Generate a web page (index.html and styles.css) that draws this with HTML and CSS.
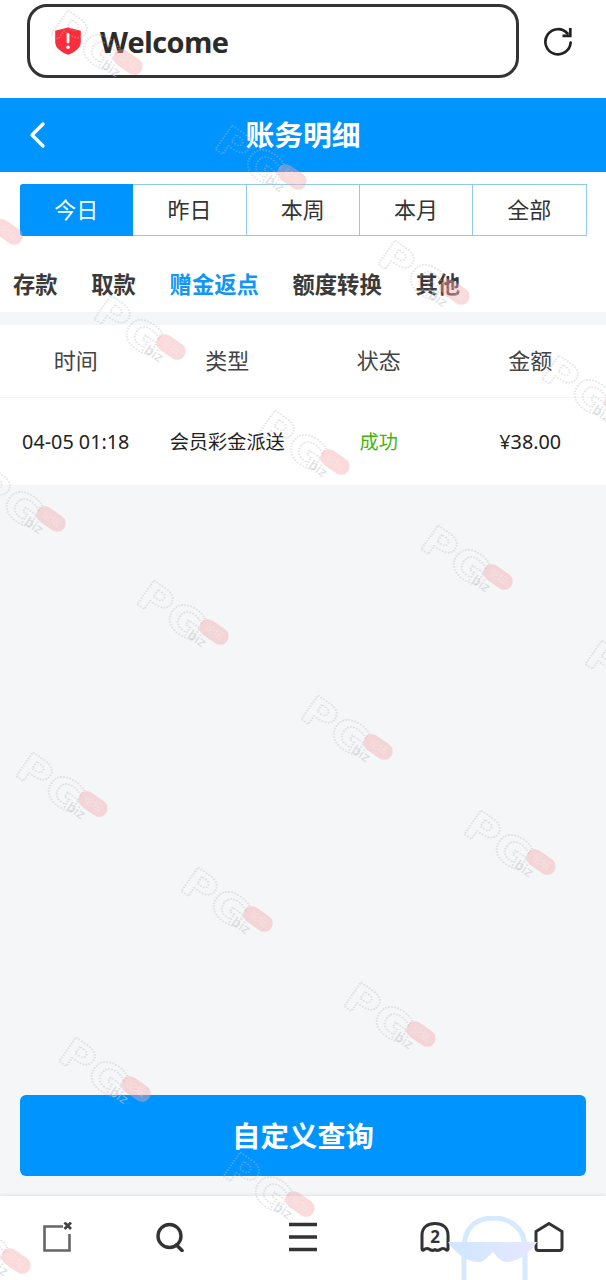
FILE: index.html
```html
<!DOCTYPE html>
<html lang="zh-CN">
<head>
<meta charset="utf-8">
<title>账务明细</title>
<link rel="stylesheet" href="styles.css">
</head>
<body>
<div class="page">
  <div class="topbar">
    <div class="address">
      <svg class="shield" viewBox="0 0 26 28"><path d="M13 0.5 L25 3.5 Q25.8 3.7 25.8 4.6 V15 C25.8 21 20 25 13 27.8 C6 25 0.2 21 0.2 15 V4.6 Q0.2 3.7 1 3.5 Z" fill="#fa2d3c"/><rect x="11.600" y="6" width="2.800" height="10.500" rx="1.400" fill="#fff"/><circle cx="13" cy="20.300" r="1.800" fill="#fff"/></svg>
      <span class="welcome">Welcome</span>
    </div>
    <svg class="reload" viewBox="0 0 30 30"><path d="M24.500 7.500 A12.600 12.600 0 1 0 27.600 16.500" fill="none" stroke="#222" stroke-width="2.700" stroke-linecap="round"/><path d="M27.300 2 V9.800 H19.500" fill="none" stroke="#222" stroke-width="2.700"/></svg>
  </div>
  <header class="header">
    <svg class="back" viewBox="0 0 18 28"><path d="M15 3 L4 14 L15 25" fill="none" stroke="#fff" stroke-width="3.400" stroke-linecap="round" stroke-linejoin="round"/></svg>
    <h1 class="title">账务明细</h1>
  </header>
  <div class="tabs">
    <div class="tab tab-on">今日</div>
    <div class="tab">昨日</div>
    <div class="tab">本周</div>
    <div class="tab">本月</div>
    <div class="tab">全部</div>
  </div>
  <nav class="subnav">
    <span>存款</span>
    <span>取款</span>
    <span class="sub-on">赠金返点</span>
    <span>额度转换</span>
    <span>其他</span>
  </nav>
  <main class="content">
    <section class="table">
      <div class="row row-head">
        <div>时间</div><div>类型</div><div>状态</div><div>金额</div>
      </div>
      <div class="row row-data">
        <div class="num">04-05 01:18</div><div>会员彩金派送</div><div class="ok">成功</div><div class="num">¥38.00</div>
      </div>
    </section>
    <button class="query">自定义查询</button>
  </main>
  <footer class="footer">
    <div class="group group-left">
      <svg class="ico" viewBox="0 0 30 30"><path d="M21 4.500 H2.500 V28.500 H27.500 V12" fill="none" stroke="#666" stroke-width="2.600"/><path d="M22.500 0.500 L29 7 M29 0.500 L22.500 7" stroke="#444" stroke-width="2.800"/></svg>
      <svg class="ico" viewBox="0 0 30 30"><circle cx="14.500" cy="14" r="11.500" fill="none" stroke="#333" stroke-width="3.400"/><path d="M21.500 23 L27 28.500" stroke="#333" stroke-width="3.600" stroke-linecap="round"/></svg>
    </div>
    <svg class="ico" viewBox="0 0 30 30"><path d="M1 2.500 H29 M1 15 H29 M1 27.500 H29" stroke="#333" stroke-width="3.600"/></svg>
    <div class="group group-right">
      <svg class="ico" viewBox="0 0 30 30"><path d="M2 27 V13 C2 5.500 7.500 1.500 15 1.500 C22.500 1.500 28 5.500 28 13 V27 Q28 28.500 26.500 28 Q23.500 25.500 21 27 Q18 29.500 15 27.500 Q12 29.500 9 27 Q6.500 25.500 3.500 28 Q2 28.500 2 27 Z" fill="none" stroke="#333" stroke-width="3" stroke-linejoin="round"/><text class="ghost-num" x="15" y="20.500" text-anchor="middle">2</text></svg>
      <svg class="ico" viewBox="0 0 30 30"><path d="M15 1.500 L28 9.500 V26 Q28 28.500 25.500 28.500 H4.500 Q2 28.500 2 26 V9.500 Z" fill="none" stroke="#333" stroke-width="3" stroke-linejoin="round"/></svg>
    </div>
    <svg class="mascot" viewBox="0 0 90 64">
      <defs><linearGradient id="mg" x1="0" x2="1" y1="0" y2="0"><stop offset="0" stop-color="#cfe6ff"/><stop offset="1" stop-color="#e6e8ff"/></linearGradient></defs>
      <path d="M16 64 V32 C16 12 28 2 45 2 C62 2 77 12 77 32 V64" fill="none" stroke="#d6e9ff" stroke-width="5"/>
      <path d="M0 26 H89 C84 34 72 46 58 46 C52 46 47 38 45 36 C42 38 37 46 31 46 C17 46 5 34 0 26 Z" fill="url(#mg)"/>
    </svg>
  </footer>

  <svg class="watermarks" viewBox="0 0 606 1280">
    <defs>
      <g id="wm">
        <g transform="translate(8,9) rotate(35) scale(1.15,1)"><text class="wm-pg" x="0" y="18">PG</text></g>
        <text class="wm-biz" transform="translate(52,50) rotate(35)" x="0" y="8">.biz</text>
        <g transform="rotate(35 78 54)">
          <rect class="wm-pill" x="62" y="45.500" width="32" height="17" rx="8.500"/>
          <text class="wm-tag" x="78" y="57.200" text-anchor="middle">论坛</text>
        </g>
      </g>
    </defs>
    <use href="#wm" x="50" y="8"/><use href="#wm" x="214" y="123"/><use href="#wm" x="377" y="238"/><use href="#wm" x="541" y="353"/>
    <use href="#wm" x="-70" y="178"/>
    <use href="#wm" x="93" y="293"/><use href="#wm" x="257" y="408"/><use href="#wm" x="420" y="523"/><use href="#wm" x="584" y="638"/>
    <use href="#wm" x="-27" y="465"/><use href="#wm" x="136" y="578"/><use href="#wm" x="300" y="693"/><use href="#wm" x="463" y="808"/>
    <use href="#wm" x="15" y="750"/><use href="#wm" x="180" y="865"/><use href="#wm" x="343" y="980"/>
    <use href="#wm" x="58" y="1035"/><use href="#wm" x="222" y="1150"/>
    <use href="#wm" x="-62" y="1207"/>
  </svg>
</div>
</body>
</html>
```
FILE: styles.css
```css
* { box-sizing: border-box; }
html, body { margin: 0; padding: 0; }
body {
  font-family: "Noto Sans", "Noto Sans CJK SC", sans-serif;
  color: #333;
  background: #fff;
  line-height: 1;
}
.page {
  position: relative;
  width: 606px;
  height: 1280px;
  display: flex;
  flex-direction: column;
  overflow: hidden;
  background: #f5f6f8;
}
.topbar {
  height: 98px;
  flex: none;
  background: #fff;
  display: flex;
  align-items: flex-start;
  padding: 4px 0 0 27px;
}
.address {
  width: 492px;
  height: 74px;
  border: 3px solid #333;
  border-radius: 20px;
  display: flex;
  align-items: center;
  padding-left: 25px;
  gap: 19px;
}
.shield { width: 26px; height: 28px; flex: none; }
.welcome {
  font-family: "Open Sans", sans-serif;
  font-weight: 700;
  font-size: 29px;
  letter-spacing: -0.6px;
  color: #2b2b2b;
}
.reload { width: 30px; height: 30px; margin: 22px 0 0 24px; }
.header {
  height: 74px;
  flex: none;
  background: #0094ff;
  position: relative;
  display: flex;
  align-items: center;
  justify-content: center;
}
.back { position: absolute; left: 28px; top: 23px; width: 18px; height: 28px; }
.title {
  margin: 0;
  font-size: 28.8px;
  font-weight: 700;
  color: #fff;
}
.tabs {
  flex: none;
  background: #fff;
  padding: 12px 19.5px 0 20px;
  display: grid;
  grid-template-columns: repeat(5, 1fr);
}
.tab {
  height: 52px;
  border: 1px solid #8ccbef;
  border-left-width: 0;
  background: #fff;
  display: flex;
  align-items: center;
  justify-content: center;
  font-size: 22px;
  color: #333;
  padding-bottom: 3px;
}
.tab-on {
  background: #0094ff;
  color: #fff;
  border-color: #0094ff;
  border-radius: 3px 0 0 3px;
}
.subnav {
  flex: none;
  height: 76px;
  background: #fff;
  display: flex;
  gap: 33.7px;
  align-items: center;
  padding: 22px 0 0 13px;
  font-size: 22.3px;
  font-weight: 700;
  color: #3a3a3a;
}
.sub-on { color: #1296f5; }
.content {
  flex: 1;
  display: flex;
  flex-direction: column;
  padding-top: 13px;
}
.table { background: #fff; }
.row {
  display: grid;
  grid-template-columns: repeat(4, 1fr);
  align-items: center;
  text-align: center;
}
.row-head {
  height: 73px;
  border-bottom: 1px solid #f4f5f7;
  font-size: 22px;
  color: #444;
  padding-bottom: 3px;
}
.row-data {
  height: 87px;
  font-size: 19.2px;
  color: #222;
}
.num { font-size: 19.8px; }
.ok { color: #3fb50f; }
.query {
  margin: auto 20px 20px;
  height: 81px;
  border: 0;
  border-radius: 6px;
  background: #0094ff;
  color: #fff;
  font-family: inherit;
  font-size: 28.4px;
  font-weight: 700;
  padding: 0 0 3px;
}
.footer {
  position: relative;
  flex: none;
  height: 84px;
  background: #fff;
  box-shadow: 0 -1px 3px rgba(0, 0, 0, 0.08);
  display: flex;
  justify-content: space-between;
  align-items: flex-start;
  padding: 26px 42px 0;
}
.group { display: flex; }
.group-left { gap: 83px; }
.group-right { gap: 84px; }
.ico { width: 30px; height: 30px; display: block; }
.ghost-num {
  font-family: "Noto Sans", sans-serif;
  font-size: 17px;
  font-weight: 700;
  fill: #333;
}
.mascot {
  position: absolute;
  left: 448px;
  top: 20px;
  width: 90px;
  height: 64px;
}
.watermarks {
  position: absolute;
  left: 0;
  top: 0;
  width: 606px;
  height: 1280px;
  pointer-events: none;
}
.wm-pg {
  font-family: "DejaVu Sans", sans-serif;
  font-size: 40px;
  font-weight: 700;
  letter-spacing: 1px;
  fill: none;
  stroke: #b9bdc4;
  stroke-width: 1.6;
  stroke-dasharray: 1.4 1.4;
  opacity: 0.4;
}
.wm-biz {
  font-family: "DejaVu Sans", sans-serif;
  font-size: 13px;
  fill: #c6c9ce;
  opacity: 0.6;
}
.wm-pill {
  fill: #f4a6aa;
  opacity: 0.42;
}
.wm-tag {
  font-family: "Noto Sans CJK SC", sans-serif;
  font-size: 10px;
  fill: #fff;
  opacity: 0.25;
}
```
